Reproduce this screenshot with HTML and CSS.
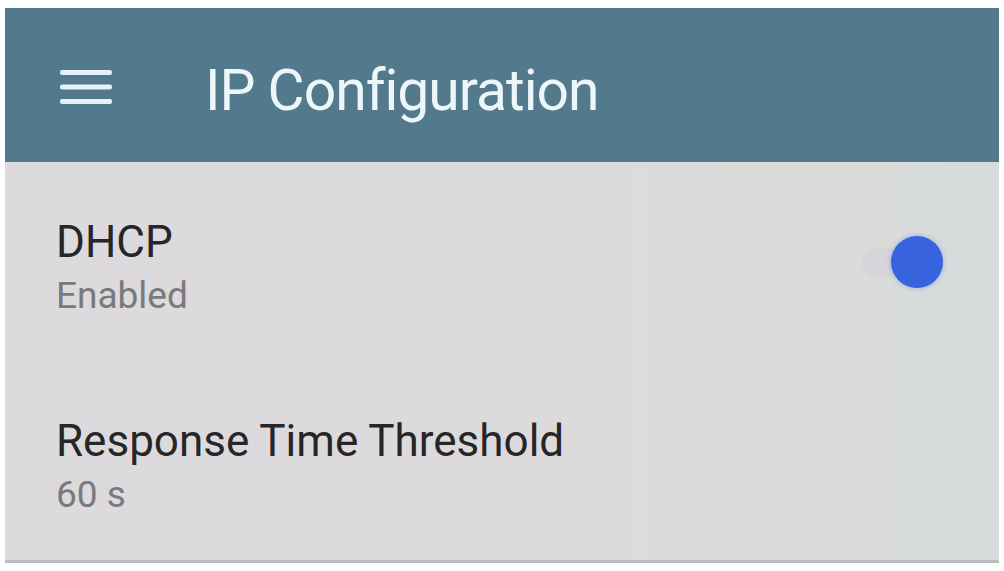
FILE: index.html
```html
<!DOCTYPE html>
<html lang="en">
<head>
<meta charset="utf-8">
<title>IP Configuration</title>
<link rel="stylesheet" href="styles.css">
</head>
<body>
<div class="panel">
  <header class="appbar">
    <svg class="menu-icon" width="52" height="34" viewBox="0 0 52 34" aria-hidden="true">
      <rect x="0" y="0" width="52" height="5" rx="2"/>
      <rect x="0" y="14.5" width="52" height="5" rx="2"/>
      <rect x="0" y="29" width="52" height="5" rx="2"/>
    </svg>
    <h1 class="appbar-title">IP Configuration</h1>
  </header>
  <main class="list">
    <div class="row">
      <div class="row-text">
        <div class="row-title">DHCP</div>
        <div class="row-sub">Enabled</div>
      </div>
      <div class="switch on">
        <span class="switch-track"></span>
        <span class="switch-thumb"></span>
      </div>
    </div>
    <div class="row">
      <div class="row-text">
        <div class="row-title">Response Time Threshold</div>
        <div class="row-sub">60 s</div>
      </div>
    </div>
  </main>
</div>
</body>
</html>
```

FILE: styles.css
```css
html, body {
  margin: 0;
  padding: 0;
  background: #ffffff;
}

body {
  font-family: Roboto, "Liberation Sans", sans-serif;
  padding: 8px 5px 0 5px;
}

.panel {
  width: 994px;
  display: flex;
  flex-direction: column;
  border-bottom: 3px solid #bdbdbf;
  background: linear-gradient(90deg, #dcdadd 0%, #dddadc 60%, #d9dcd8 85%, #d6dadb 100%);
}

.appbar {
  height: 154px;
  box-sizing: border-box;
  padding: 54px 0 0 55px;
  display: flex;
  align-items: flex-start;
  background: #53798d;
}

.menu-icon {
  margin-top: 7.5px;
  fill: #e4f1f6;
  flex: none;
}

.appbar-title {
  margin: 0 0 0 93px;
  font-size: 57px;
  line-height: 57px;
  font-weight: 400;
  color: #edf6f9;
  letter-spacing: -1px;
}

.list {
  display: flex;
  flex-direction: column;
}

.row {
  height: 199px;
  box-sizing: border-box;
  padding: 10px 56px 0 51px;
  display: flex;
  align-items: center;
  justify-content: space-between;
}

.row-text {
  display: flex;
  flex-direction: column;
  gap: 13px;
}

.row-title {
  font-size: 44px;
  line-height: 44px;
  color: #262628;
}

.row-sub {
  font-size: 37px;
  line-height: 37px;
  color: #7a797c;
}

.switch {
  position: relative;
  width: 86px;
  height: 54px;
  margin-bottom: 9px;
}

.switch-track {
  position: absolute;
  left: 4px;
  right: 14px;
  top: 13px;
  height: 28px;
  border-radius: 14px;
  background: rgba(190, 170, 225, 0.13);
}

.switch-thumb {
  position: absolute;
  right: 0;
  top: 1px;
  width: 52px;
  height: 52px;
  border-radius: 50%;
  background: #3763df;
  box-shadow: 0 0 5px rgba(70, 110, 230, 0.45);
}
```
